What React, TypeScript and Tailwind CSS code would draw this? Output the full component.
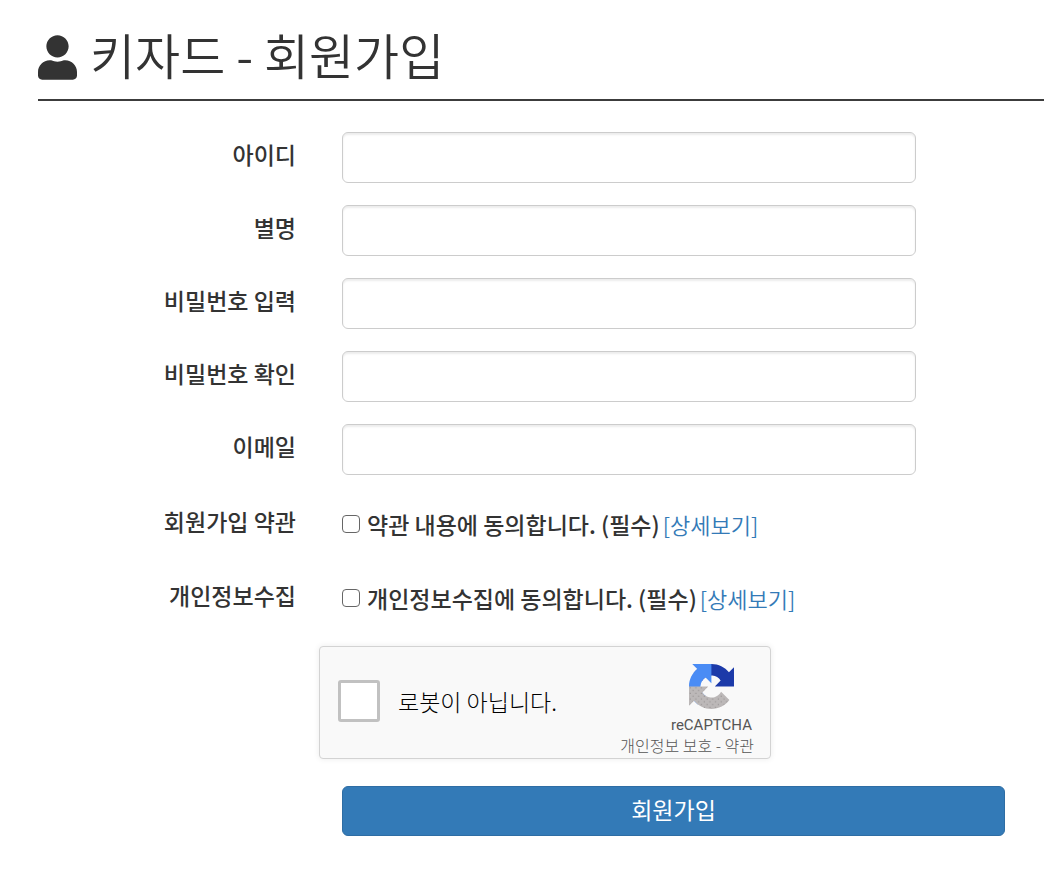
import React, { useState } from 'react';
import { FaUser } from 'react-icons/fa';

const FIELDS = [
  { id: 'user_id', label: '아이디', type: 'text' },
  { id: 'nickname', label: '별명', type: 'text' },
  { id: 'password', label: '비밀번호 입력', type: 'password' },
  { id: 'password_confirm', label: '비밀번호 확인', type: 'password' },
  { id: 'email', label: '이메일', type: 'email' },
];

const AGREEMENTS = [
  { id: 'terms', title: '회원가입 약관', text: '약관 내용에 동의합니다. (필수)' },
  { id: 'privacy', title: '개인정보수집', text: '개인정보수집에 동의합니다. (필수)' },
];

const RecaptchaLogo: React.FC = () => (
  <svg viewBox="0 0 64 64" className="w-[45px] h-[45px]" aria-hidden="true">
    <defs>
      <pattern id="dots" width="8" height="8" patternUnits="userSpaceOnUse">
        <rect width="8" height="8" fill="#bcb8b8" />
        <rect x="1" y="1" width="1.6" height="1.6" fill="#969292" />
        <rect x="5" y="5" width="1.6" height="1.6" fill="#969292" />
      </pattern>
    </defs>
    <path fill="#1c3aa9" d="M64 31.955l-.033-1.37V4.687l-7.16 7.16C50.948 4.674 42.033.093 32.05.093c-10.4 0-19.622 4.96-25.458 12.64l11.736 11.86a15.55 15.55 0 0 1 4.754-5.334c2.05-1.6 4.952-2.906 8.968-2.906.485 0 .86.057 1.135.163 4.976.393 9.288 3.14 11.828 7.124l-8.307 8.307L64 31.953" />
    <path fill="#4a8cf5" d="M31.862.094l-1.37.033H4.594l7.16 7.16C4.58 13.147 0 22.06 0 32.046c0 10.4 4.96 19.622 12.64 25.458L24.5 45.768a15.55 15.55 0 0 1-5.334-4.754c-1.6-2.05-2.906-4.952-2.906-8.968 0-.485.057-.86.163-1.135.393-4.976 3.14-9.288 7.124-11.828l8.307 8.307L31.86.095" />
    <path fill="url(#dots)" d="M.001 32.045l.033 1.37v25.898l7.16-7.16c5.86 7.173 14.774 11.754 24.76 11.754 10.4 0 19.622-4.96 25.458-12.64l-11.736-11.86a15.55 15.55 0 0 1-4.754 5.334c-2.05 1.6-4.952 2.906-8.968 2.906-.485 0-.86-.057-1.135-.163-4.976-.393-9.288-3.14-11.828-7.124l8.307-8.307c-10.522.04-22.4.066-27.295-.005" />
  </svg>
);

const Recaptcha: React.FC = () => (
  <div className="flex justify-between w-[452px] h-[113px] pl-[18px] pr-4 bg-[#f9f9f9] border border-[#d3d3d3] rounded shadow-[0_0_6px_rgba(0,0,0,0.08)]">
    <div className="flex items-center gap-[18px] pb-1">
      <input
        id="robot"
        type="checkbox"
        className="appearance-none size-[42px] bg-white border-3 border-[#c1c1c1] rounded-[3px] checked:bg-[#4a8cf5]"
      />
      <label htmlFor="robot" className="text-[23px] leading-8 font-light text-black">로봇이 아닙니다.</label>
    </div>
    <div className="flex flex-col items-end pt-[17px] text-[#555555]">
      <div className="flex flex-col items-center pr-[2px]">
        <RecaptchaLogo />
        <span className="pt-1 font-[Roboto] text-[15px] leading-6">reCAPTCHA</span>
      </div>
      <div className="text-[16px] leading-4 font-light">
        <a href="#privacy-policy">개인정보 보호</a>
        <span> - </span>
        <a href="#service-terms">약관</a>
      </div>
    </div>
  </div>
);

const App: React.FC = () => {
  const [values, setValues] = useState<Record<string, string>>({});

  return (
    <div className="pl-[38px] pt-[26px] pb-8 text-[#333333] font-['Noto_Sans_CJK_KR',sans-serif]">
      <h1 className="flex items-end gap-[13px] h-[75px] pb-[19px] border-b-2 border-[#3c3c3c] text-[49px] leading-[52px] font-[350]">
        <FaUser className="w-[39px] h-[45px]" />
        키자드 - 회원가입
      </h1>

      <form className="flex flex-col gap-[22px] pt-[31px] pr-[39px]" onSubmit={(e) => e.preventDefault()}>
        {FIELDS.map((field) => (
          <div key={field.id} className="grid grid-cols-[258px_1fr] gap-x-[46px]">
            <label htmlFor={field.id} className="pt-[6px] text-right text-[23px] leading-8 font-medium">
              {field.label}
            </label>
            <input
              id={field.id}
              type={field.type}
              value={values[field.id] || ''}
              onChange={(e) => setValues({ ...values, [field.id]: e.target.value })}
              className="w-full max-w-[574px] h-[51px] px-[18px] text-[23px] bg-white border border-[#cccccc] rounded-md shadow-[inset_0_2px_2px_rgba(0,0,0,0.075)] outline-none focus:border-[#66afe9]"
            />
          </div>
        ))}

        {AGREEMENTS.map((item) => (
          <div key={item.id} className="grid grid-cols-[258px_1fr] gap-x-[46px] h-[52px] text-[23px] leading-8">
            <div className="pt-2 text-right font-medium">{item.title}</div>
            <div className="flex items-start pt-[11px]">
              <input
                id={item.id}
                type="checkbox"
                className="appearance-none size-[18px] mt-[7px] mr-[7px] bg-white border border-[#666666] rounded checked:bg-[#337ab7]"
              />
              <label htmlFor={item.id} className="font-medium">{item.text}</label>
              <a href={`#${item.id}`} className="ml-[3px] text-[22px] font-[350] text-[#337ab7] hover:underline">[상세보기]</a>
            </div>
          </div>
        ))}

        <div className="pl-[281px] pt-px">
          <Recaptcha />
        </div>

        <div className="pl-[304px] pt-[5px]">
          <button
            type="submit"
            className="w-full h-[50px] pb-[5px] text-[23px] leading-8 text-white bg-[#337ab7] border border-[#2e6da4] rounded-md hover:bg-[#286090]"
          >
            회원가입
          </button>
        </div>
      </form>
    </div>
  );
};

export default App;
